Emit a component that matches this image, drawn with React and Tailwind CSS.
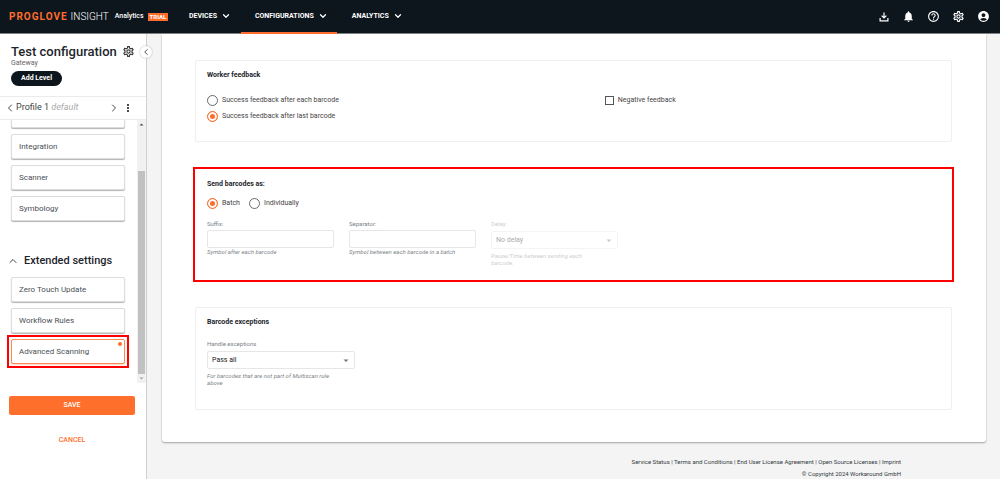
import { ChevronDown, ChevronLeft, ChevronRight, ChevronUp } from 'lucide-react';
import {
  MdAccountCircle,
  MdHelpOutline,
  MdMoreVert,
  MdNotifications,
  MdOutlineSettings,
} from 'react-icons/md';

const radioClass =
  'size-[11px] shrink-0 appearance-none rounded-full border border-[#6b6b6b] bg-white checked:border-[#ff6c2b] checked:bg-[#ff6c2b] checked:shadow-[inset_0_0_0_2px_white]';

function NavItem({ label, active }) {
  return (
    <button
      type="button"
      className={`-mb-px flex items-center gap-1 border-b-2 pr-[9px] pl-[14px] text-[7px] font-bold text-white ${
        active ? 'border-[#ff6c2b]' : 'border-transparent'
      }`}
    >
      {label}
      <ChevronDown size={10} strokeWidth={3} />
    </button>
  );
}

function Header() {
  return (
    <header className="relative z-10 flex h-[34px] shrink-0 border-b border-[#7d8084] bg-[#0e161d] text-white">
      <div className="flex w-[175px] shrink-0 items-center pl-[9px]">
        <span className="text-[10px] font-bold tracking-widest text-[#ff6c2b]">PROGLOVE</span>
        <span className="ml-[3px] text-[10px] font-light">INSIGHT</span>
        <span className="ml-[6px] text-[7px] font-medium">Analytics</span>
        <span className="ml-1 bg-[#ff6c2b] px-[2px] text-[6px] leading-[8px] font-bold">TRIAL</span>
      </div>
      <nav className="flex gap-px">
        <NavItem label="DEVICES" />
        <NavItem label="CONFIGURATIONS" active />
        <NavItem label="ANALYTICS" />
      </nav>
      <div className="flex flex-1 items-center justify-end gap-3 pr-[10px]">
        <button type="button" aria-label="Downloads">
          <svg viewBox="0 0 24 24" className="size-3" fill="currentColor">
            <path d="M10.800 3h2.400v8l2.800-2.700 1.600 1.700L12 15.500 6.400 10 8 8.300l2.800 2.700zM3 14h2.400v4.500h13.200V14H21v7H3z" />
          </svg>
        </button>
        <button type="button" aria-label="Notifications"><MdNotifications size={13} /></button>
        <button type="button" aria-label="Help"><MdHelpOutline size={13} /></button>
        <button type="button" aria-label="Settings"><MdOutlineSettings size={13} /></button>
        <button type="button" aria-label="Account"><MdAccountCircle size={13} /></button>
      </div>
    </header>
  );
}

function SettingButton({ label, active }) {
  return (
    <button
      type="button"
      className={`relative h-[25px] w-full shrink-0 rounded-[2px] border bg-white pl-[7px] text-left text-[8px] text-[#4a5056] ${
        active
          ? 'border-[#ff8a55] shadow-[0_1px_1px_rgba(255,108,43,0.3)]'
          : 'border-[#dcdcdc] shadow-[0_1px_1px_rgba(0,0,0,0.3)]'
      }`}
    >
      {label}
      {active && <span className="absolute top-[2px] right-[2px] size-1 rounded-full bg-[#ff6c2b]" />}
    </button>
  );
}

function Sidebar() {
  return (
    <aside className="relative flex w-[147px] shrink-0 flex-col border-r border-[#d0d0d0] bg-white">
      <button
        type="button"
        aria-label="Collapse sidebar"
        className="absolute top-3 -right-[6px] flex size-3 items-center justify-center rounded-full bg-white text-[#333] shadow-[0_0_2px_rgba(0,0,0,0.3)]"
      >
        <ChevronLeft size={10} />
      </button>
      <div className="flex flex-col items-start border-b border-[#ebebeb] pt-[10px] pr-[11px] pb-[10px] pl-[11px]">
        <div className="flex w-full items-center justify-between">
          <h1 className="text-[13px] leading-[15px] font-medium text-[#1d252c]">Test configuration</h1>
          <button type="button" aria-label="Configuration settings" className="text-[#333]">
            <MdOutlineSettings size={13} />
          </button>
        </div>
        <p className="text-[7px] leading-[8px] text-[#666]">Gateway</p>
        <button
          type="button"
          className="mt-[4px] h-[15px] rounded-full bg-[#0e161d] px-[10px] text-[7px] leading-[15px] font-bold text-white"
        >
          Add Level
        </button>
      </div>
      <div className="flex h-[23px] shrink-0 items-center border-b border-[#ebebeb] pl-1 text-[#444]">
        <button type="button" aria-label="Previous profile"><ChevronLeft size={12} /></button>
        <span className="flex-1 text-[9px]">
          Profile 1 <em className="text-[#aaa]">default</em>
        </span>
        <button type="button" aria-label="Next profile"><ChevronRight size={12} /></button>
        <button type="button" aria-label="Profile actions" className="mr-3 ml-[2px] text-[#222]">
          <MdMoreVert size={12} />
        </button>
      </div>
      <div className="flex min-h-0 flex-1">
        <div className="flex min-w-0 flex-1 flex-col justify-end gap-[6px] overflow-hidden pr-[12px] pb-[19px] pl-[11px]">
          <SettingButton label="Gateway" />
          <SettingButton label="Integration" />
          <SettingButton label="Scanner" />
          <SettingButton label="Symbology" />
          <h2 className="mt-[25px] mb-px flex shrink-0 items-center gap-[5px] text-[11px] leading-[18px] font-medium text-[#1d252c]">
            <ChevronUp size={12} className="-ml-1 text-[#444]" />
            Extended settings
          </h2>
          <SettingButton label="Zero Touch Update" />
          <SettingButton label="Workflow Rules" />
          <div className="-m-1 flex shrink-0 border-2 border-[#f00] p-[2px]">
            <SettingButton label="Advanced Scanning" active />
          </div>
        </div>
        <div className="flex w-[9px] flex-col items-center bg-[#f1f1f1]" aria-hidden="true">
          <svg viewBox="0 0 9 9" className="size-[9px]"><path d="M2.500 5.500h4l-2-2z" fill="#505050" /></svg>
          <div className="mt-[42px] w-[7px] flex-1 bg-[#c1c1c1]" />
          <svg viewBox="0 0 9 9" className="size-[9px]"><path d="M2.500 3.500h4l-2 2z" fill="#a0a0a0" /></svg>
        </div>
      </div>
      <div className="flex h-[96px] shrink-0 flex-col gap-[15px] pt-[13px] pr-[11px] pl-[9px] text-[7px] font-medium">
        <button type="button" className="h-[19px] shrink-0 rounded-[2px] bg-[#ff6f2c] text-white">SAVE</button>
        <button type="button" className="py-[6px] leading-[8px] text-[#ff6f2c]">CANCEL</button>
      </div>
    </aside>
  );
}

function Radio({ name, label, defaultChecked }) {
  return (
    <label className="flex items-center gap-1 text-[7px] leading-4 text-[#444]">
      <input type="radio" name={name} defaultChecked={defaultChecked} className={radioClass} />
      {label}
    </label>
  );
}

function TextField({ id, label, hint }) {
  return (
    <div className="w-[127px] text-[6px] leading-[8px] text-[#7d8388]">
      <label htmlFor={id} className="block">{label}</label>
      <input id={id} type="text" className="mt-[2px] block h-[18px] w-full rounded-[2px] border border-[#e6e6e6] px-1 text-[7px]" />
      <p className="whitespace-nowrap italic">{hint}</p>
    </div>
  );
}

function SelectField({ id, label, value, hint, disabled }) {
  return (
    <div className="text-[6px] leading-[7px] text-[#7d8388]">
      <label htmlFor={id} className="block leading-[8px]">{label}</label>
      <div className="relative mt-[3px]">
        <select
          id={id}
          disabled={disabled}
          className="block h-[18px] w-full appearance-none rounded-[2px] border border-[#e6e6e6] bg-white pl-1 text-[7px] text-[#222]"
        >
          <option>{value}</option>
        </select>
        <svg viewBox="0 0 6 4" className="pointer-events-none absolute top-[8px] right-[6px] h-1 w-[6px]">
          <path d="M.500.500h5L3 3z" fill="#777" />
        </svg>
      </div>
      <p className="mt-[3px] pr-4 italic">{hint}</p>
    </div>
  );
}

const sectionTitle = 'text-[7px] leading-[10px] font-bold text-[#1d252c]';

function Content() {
  return (
    <div className="rounded-b-[3px] bg-white pt-[26px] pr-[34px] pb-8 pl-[33px] shadow-[0_1px_2px_rgba(0,0,0,0.35)]">
      <section className="h-[82px] rounded-[2px] border border-[#efefef] px-[11px] pt-[9px]">
        <h3 className={sectionTitle}>Worker feedback</h3>
        <div className="mt-3 grid grid-cols-[54%_1fr] items-start">
          <div>
            <Radio name="worker" label="Success feedback after each barcode" />
            <Radio name="worker" label="Success feedback after last barcode" defaultChecked />
          </div>
          <label className="ml-[2px] flex items-center gap-1 text-[7px] leading-4 text-[#444]">
            <input type="checkbox" className="size-[9px] appearance-none border border-[#555] bg-white checked:bg-[#ff6c2b]" />
            Negative feedback
          </label>
        </div>
      </section>

      <section className="-mx-[2px] mt-[25px] h-[115px] border-2 border-[#f00] px-3 pt-[10px]">
        <h3 className={sectionTitle}>Send barcodes as:</h3>
        <div className="mt-[6px] flex gap-[9px]">
          <Radio name="send" label="Batch" defaultChecked />
          <Radio name="send" label="Individually" />
        </div>
        <div className="mt-[9px] flex gap-[15px]">
          <TextField id="suffix" label="Suffix:" hint="Symbol after each barcode" />
          <TextField id="separator" label="Separator:" hint="Symbol between each barcode in a batch" />
          <div className="w-[127px] opacity-40">
            <SelectField id="delay" label="Delay:" value="No delay" hint="Pause/Time between sending each barcode." disabled />
          </div>
        </div>
      </section>

      <section className="mt-[25px] h-[103px] rounded-[2px] border border-[#efefef] px-[11px] pt-[9px]">
        <h3 className={sectionTitle}>Barcode exceptions</h3>
        <div className="mt-[13px] w-[148px]">
          <SelectField id="exceptions" label="Handle exceptions" value="Pass all" hint="For barcodes that are not part of Multiscan rule above" />
        </div>
      </section>
    </div>
  );
}

const footerLinks = ['Service Status', 'Terms and Conditions', 'End User License Agreement', 'Open Source Licenses', 'Imprint'];

export default function App() {
  return (
    <div className="flex h-screen flex-col overflow-hidden bg-[#f4f4f4] font-[Roboto,sans-serif]">
      <Header />
      <div className="flex min-h-0 flex-1">
        <Sidebar />
        <main className="min-w-0 flex-1 pr-[14px] pl-[15px]">
          <Content />
          <footer className="pt-[14px] pr-[85px] text-right text-[6px] leading-3 text-[#33393f]">
            <p>
              {footerLinks.map((link, i) => (
                <span key={link}>
                  {i > 0 && ' | '}
                  <a href="#">{link}</a>
                </span>
              ))}
            </p>
            <p>© Copyright 2024 Workaround GmbH</p>
          </footer>
        </main>
      </div>
    </div>
  );
}
